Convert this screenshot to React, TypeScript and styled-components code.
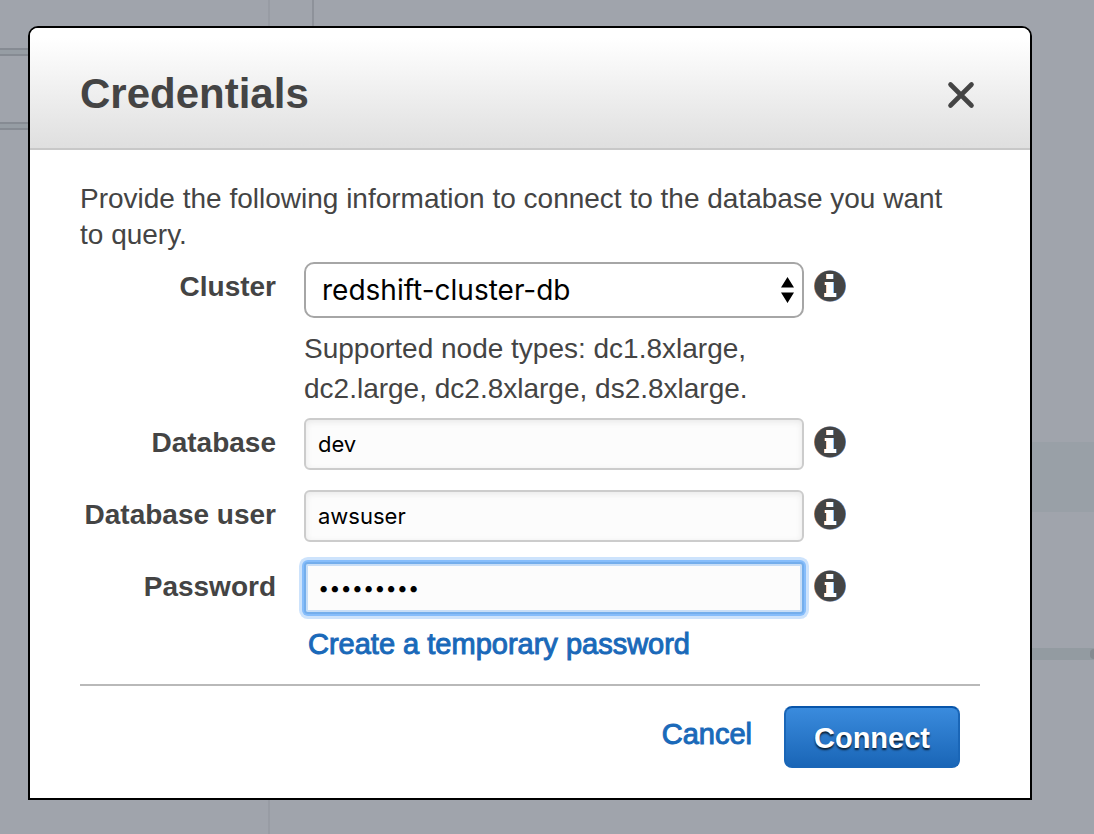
import React from "react";
import styled, { createGlobalStyle } from "styled-components";

const GlobalStyle = createGlobalStyle`
  *, *::before, *::after { box-sizing: border-box; }
  body {
    margin: 0;
    background: #a0a4ac;
    color: #444;
    font-family: "Liberation Sans", Arial, sans-serif;
    font-size: 28px;
    line-height: 36px;
  }
`;

const Page = styled.div`
  position: relative;
  min-height: 100vh;
  overflow: hidden;
`;

/* Dimmed console page behind the dialog */
const Dimmed = styled.div`
  position: absolute;
  inset: 0;
  display: flex;
`;

const Sidebar = styled.div`
  flex: 0 0 270px;
  border-right: 2px solid #989ca4;
  padding-top: 48px;
  display: flex;
  flex-direction: column;
  gap: 66px;
`;

const SidebarRule = styled.div`
  height: 8px;
  background: #969da4;
  border: solid #868b93;
  border-width: 2px 0;
`;

const Gutter = styled.div`
  flex: 0 0 44px;
  height: 50%;
  border-right: 2px solid #8e929a;
`;

const Results = styled.div`
  flex: 1;
  padding-top: 442px;
`;

const ResultsHeader = styled.div`
  height: 70px;
  background: #99a0a7;
`;

const ScrollTrack = styled.div`
  display: flex;
  justify-content: flex-end;
  height: 12px;
  margin-top: 136px;
  background: #939ba1;
`;

const ScrollThumb = styled.div`
  width: 4px;
  margin: 1px 0;
  border-radius: 5px 0 0 5px;
  background: #858a90;
`;

const Dialog = styled.section`
  position: relative;
  margin: 26px 62px 34px 28px;
  background: #fff;
  border: 2px solid #000;
  border-radius: 10px 10px 0 0;
`;

const Header = styled.header`
  display: flex;
  align-items: center;
  justify-content: space-between;
  height: 122px;
  padding: 12px 50px 0;
  border-bottom: 2px solid #c8c8c8;
  border-radius: 8px 8px 0 0;
  background: linear-gradient(#fff 8%, #dfdfdf);
`;

const Title = styled.h1`
  margin: 0;
  font-size: 42px;
  line-height: 48px;
  font-weight: bold;
`;

const CloseButton = styled.button`
  display: flex;
  padding: 6px 4px 4px;
  border: 0;
  background: none;
  cursor: pointer;
`;

const Body = styled.div`
  padding: 31px 50px 30px;
`;

const Intro = styled.p`
  margin: 0 0 9px;
  padding-right: 20px;
`;

const Fields = styled.div`
  display: flex;
  flex-direction: column;
  gap: 20px;
  padding-right: 134px;
`;

const Row = styled.div<{ $tight?: boolean }>`
  display: grid;
  grid-template-columns: 196px minmax(0, 1fr) 32px;
  align-items: start;
  margin-bottom: ${(p) => (p.$tight ? "-11px" : "0")};
`;

const Label = styled.label`
  padding-top: 7px;
  font-weight: bold;
  text-align: right;
  white-space: nowrap;
`;

const Control = styled.div`
  margin: 0 10px 0 28px;
`;

const SelectWrap = styled.div`
  position: relative;
`;

const Select = styled.select`
  display: block;
  width: 100%;
  height: 56px;
  padding: 0 40px 0 16px;
  appearance: none;
  border: 2px solid #a6a6a6;
  border-radius: 10px;
  background: #fff;
  color: #000;
  font: 28px Inter, sans-serif;
`;

const SelectArrows = styled.svg`
  position: absolute;
  right: 10px;
  top: 15px;
  pointer-events: none;
`;

const Hint = styled.p`
  margin: 11px 0 0;
  line-height: 40px;
`;

const Input = styled.input`
  display: block;
  width: 100%;
  height: 52px;
  padding: 0 12px;
  border: 2px solid #ccc;
  border-radius: 6px;
  outline: 0;
  background: #fcfcfc;
  box-shadow: inset 0 2px 6px #e8e8e8;
  color: #000;
  font: 22px Inter, sans-serif;

  &[type="password"] {
    border-color: #74aeec;
    border-radius: 4px;
    box-shadow: inset 0 0 0 2px #c8def7, 0 0 0 2px #86bdfb, 0 0 0 5px #cde3fc;
    font-size: 20px;
  }
`;

const InfoButton = styled.button`
  display: flex;
  margin-top: 8px;
  padding: 0;
  border: 0;
  background: none;
  cursor: pointer;
`;

const Link = styled.a`
  color: #1a69b9;
  font-size: 29px;
  text-decoration: none;
  -webkit-text-stroke: 1px #1a69b9;
`;

const PasswordLink = styled(Link)`
  display: block;
  margin: 12px 0 0 4px;
`;

const CancelLink = styled(Link)`
  padding-top: 10px;
`;

const Footer = styled.footer`
  display: flex;
  align-items: flex-start;
  justify-content: flex-end;
  gap: 32px;
  margin-top: 22px;
  padding: 20px 20px 0 0;
  border-top: 2px solid #b9b9b9;
`;

const ConnectButton = styled.button`
  height: 62px;
  width: 176px;
  padding: 2px 0 0;
  border: 2px solid #1a66b7;
  border-top-color: #0855aa;
  border-radius: 8px;
  background: linear-gradient(#3a8bdd, #1a66b7);
  color: #fff;
  font: bold 29px "Liberation Sans", Arial, sans-serif;
  text-shadow: 0 2px 2px rgba(0, 0, 0, 0.75);
  cursor: pointer;
`;

function Info({ about }: { about: string }) {
  return (
    <InfoButton type="button" aria-label={`About ${about}`}>
      <svg width="32" height="32" viewBox="0 0 32 32" aria-hidden="true">
        <circle cx="15.5" cy="16" r="15.500" fill="#c98a5c" />
        <circle cx="16.5" cy="16" r="15.500" fill="#5c93d6" />
        <circle cx="16" cy="16" r="15.300" fill="#444" />
        <path fill="#f0a878" d="M12 4h2v5h-2zM10.500 12h1.500v3h-1.500zM12 15h1.500v8H12zM10 23h1.500v4H10z" />
        <path fill="#8fc4f5" d="M18 4h1.500v5H18zM18.500 12h1.500v11h-1.500zM21 23h1.500v4H21z" />
        <path fill="#fff" d="M12.500 4H19v5h-6.500zM11 12h8v11h3v4H10.500v-4h2v-8H11z" />
      </svg>
    </InfoButton>
  );
}

export default function App() {
  return (
    <Page>
      <GlobalStyle />
      <Dimmed aria-hidden="true">
        <Sidebar>
          <SidebarRule />
          <SidebarRule />
        </Sidebar>
        <Gutter />
        <Results>
          <ResultsHeader />
          <ScrollTrack>
            <ScrollThumb />
          </ScrollTrack>
        </Results>
      </Dimmed>

      <Dialog role="dialog" aria-modal="true" aria-labelledby="title">
        <Header>
          <Title id="title">Credentials</Title>
          <CloseButton type="button" aria-label="Close">
            <svg width="30" height="30" viewBox="0 0 30 30" aria-hidden="true">
              <path
                d="M4.500 4.500L25.500 25.500M25.500 4.500L4.500 25.500"
                stroke="#444"
                strokeWidth="4.600"
                strokeLinecap="round"
              />
            </svg>
          </CloseButton>
        </Header>
        <Body>
          <Intro>
            Provide the following information to connect to the database you
            want to query.
          </Intro>
          <Fields>
            <Row $tight>
              <Label htmlFor="cluster">Cluster</Label>
              <Control>
                <SelectWrap>
                  <Select id="cluster">
                    <option>redshift-cluster-db</option>
                  </Select>
                  <SelectArrows width="13" height="26" viewBox="0 0 13 26" aria-hidden="true">
                    <path d="M6.500 0L13 10.500H0zM0 15.500H13L6.500 26z" />
                  </SelectArrows>
                </SelectWrap>
                <Hint>
                  Supported node types: dc1.8xlarge, dc2.large, dc2.8xlarge,
                  ds2.8xlarge.
                </Hint>
              </Control>
              <Info about="cluster" />
            </Row>
            <Row>
              <Label htmlFor="database">Database</Label>
              <Control>
                <Input id="database" type="text" defaultValue="dev" />
              </Control>
              <Info about="database" />
            </Row>
            <Row>
              <Label htmlFor="user">Database user</Label>
              <Control>
                <Input id="user" type="text" defaultValue="awsuser" />
              </Control>
              <Info about="database user" />
            </Row>
            <Row>
              <Label htmlFor="password">Password</Label>
              <Control>
                <Input id="password" type="password" defaultValue="ninechars" />
                <PasswordLink href="#temporary">Create a temporary password</PasswordLink>
              </Control>
              <Info about="password" />
            </Row>
          </Fields>
          <Footer>
            <CancelLink href="#cancel">Cancel</CancelLink>
            <ConnectButton type="button">Connect</ConnectButton>
          </Footer>
        </Body>
      </Dialog>
    </Page>
  );
}
